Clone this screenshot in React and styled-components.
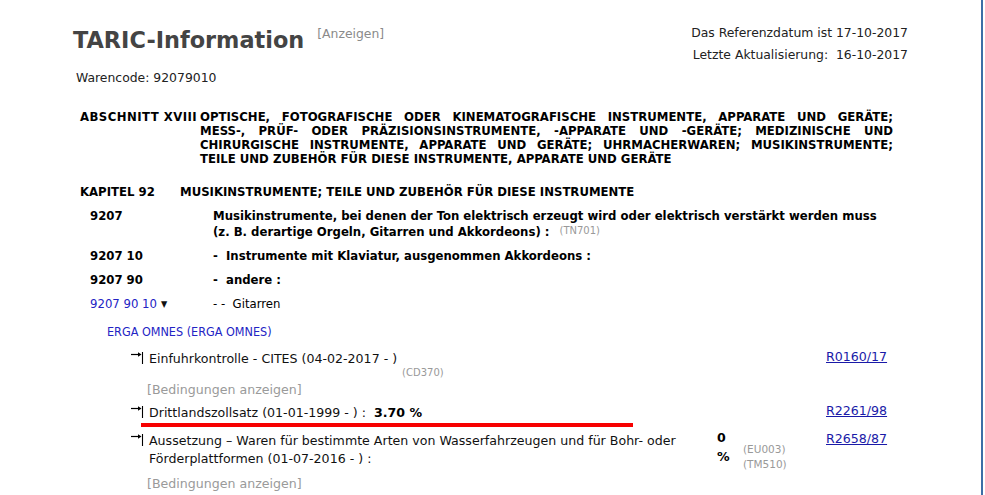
import React from 'react';
import styled, { createGlobalStyle } from 'styled-components';

const GlobalStyle = createGlobalStyle`
  html, body {
    margin: 0;
    padding: 0;
    background: #ffffff;
  }
  body {
    font-family: "DejaVu Sans", Verdana, sans-serif;
    color: #222;
  }
`;

const Page = styled.div`
  position: relative;
  width: 983px;
  height: 495px;
  overflow: hidden;
  border-right: 2px solid #3c6ea6;
  padding: 22px 73px 0 73px;
  box-sizing: border-box;
`;

const Header = styled.div`
  display: flex;
  justify-content: space-between;
  align-items: flex-start;
`;

const TitleRow = styled.div`
  display: flex;
  align-items: flex-start;
  gap: 13px;
  margin-top: 5px;
`;

const Title = styled.h1`
  margin: 0;
  font-family: "DejaVu Sans", Verdana, sans-serif;
  font-size: 22.4px;
  line-height: 26px;
  font-weight: bold;
  color: #444;
`;

const ShowLink = styled.span`
  font-size: 12.4px;
  line-height: 14px;
  color: #8a8a8a;
`;

const Dates = styled.div`
  text-align: right;
  font-size: 12.4px;
  line-height: 22px;
  color: #222;
`;

const Warencode = styled.div`
  margin: 2px 0 0 3px;
  font-size: 12.4px;
  line-height: 20px;
`;

const Heading = styled.div`
  display: grid;
  grid-template-columns: ${p => p.$label}px 1fr;
  margin: ${p => p.$top}px 0 0 7px;
  font-family: "DejaVu Sans Condensed", Tahoma, sans-serif;
  font-weight: bold;
  font-size: 13px;
  line-height: ${p => p.$lh}px;
  color: #000;
`;

const HeadingLabel = styled.div`
  letter-spacing: ${p => p.$spacing || 0}px;
`;

const HeadingText = styled.div`
  width: 693px;
`;

const JustifiedLine = styled.div`
  text-align: ${p => (p.$last ? 'left' : 'justify')};
  text-align-last: ${p => (p.$last ? 'left' : 'justify')};
  white-space: nowrap;
`;

const Nomenclature = styled.div`
  display: flex;
  flex-direction: column;
  gap: 8px;
  margin: 8px 0 0 17px;
  font-family: "DejaVu Sans Condensed", Tahoma, sans-serif;
  font-size: 13px;
  line-height: 16px;
`;

const CodeRow = styled.div`
  display: grid;
  grid-template-columns: 123px 1fr;
  font-weight: ${p => (p.$bold ? 'bold' : 'normal')};
  color: #000;
  margin-top: ${p => p.$shift || 0}px;
`;

const Code = styled.div`
  color: ${p => (p.$link ? '#2323c4' : '#000')};
  white-space: pre;
`;

const Toggle = styled.span`
  font-size: 9px;
  color: #111;
  margin-left: 4px;
  vertical-align: 1px;
`;

const Desc = styled.div`
  white-space: pre-wrap;
  width: 665px;
`;

const Note = styled.span`
  font-family: "DejaVu Sans", Verdana, sans-serif;
  font-weight: normal;
  font-size: 10px;
  line-height: 10px;
  color: #999;
  vertical-align: ${p => p.$drop || 0}px;
  margin-left: ${p => p.$gap || 0}px;
`;

const Geo = styled.div`
  margin: 12px 0 0 34px;
  font-family: "DejaVu Sans Condensed", Tahoma, sans-serif;
  font-size: 12.5px;
  line-height: 16px;
  color: #2323c4;
`;

const Measures = styled.div`
  display: flex;
  flex-direction: column;
  margin: 10px 0 0 57px;
  font-size: 12.6px;
  line-height: 18px;
  color: #111;
`;

const Measure = styled.div`
  display: grid;
  grid-template-columns: 19px 568px 26px 83px auto;
  align-items: start;
  margin-top: ${p => p.$top || 0}px;
`;

const Arrow = styled.svg`
  display: block;
  margin-top: 2px;
`;

const MeasureText = styled.div`
  width: ${p => p.$width || 568}px;
`;

const Value = styled.div`
  width: 16px;
  font-weight: bold;
  line-height: 19px;
  margin-top: -4px;
  color: #000;
`;

const Footnotes = styled.div`
  display: flex;
  flex-direction: column;
  margin-top: 10px;
  font-size: 10.5px;
  line-height: 15px;
  color: #999;
`;

const Regulation = styled.a`
  color: #1a1aa8;
  text-decoration: underline;
  margin-top: -2px;
`;

const Conditions = styled.div`
  margin: ${p => p.$top || 0}px 0 0 17px;
  color: #9a9a9a;
  line-height: 18px;
`;

const Rate = styled.b`
  color: #000;
  margin-left: 4px;
`;

const RedMark = styled.div`
  position: absolute;
  left: 141px;
  top: 423px;
  width: 492px;
  height: 4px;
  background: #f70000;
`;

const EndArrow = () => (
  <Arrow width="14" height="13" viewBox="0 0 14 13">
    <line x1="1" y1="2.5" x2="9" y2="2.5" stroke="#000" strokeWidth="1.2" />
    <polygon points="8,0.3 11.5,2.5 8,4.7" fill="#000" />
    <line x1="12.5" y1="0" x2="12.5" y2="12" stroke="#000" strokeWidth="1.1" />
  </Arrow>
);

const sectionLines = [
  'OPTISCHE, FOTOGRAFISCHE ODER KINEMATOGRAFISCHE INSTRUMENTE, APPARATE UND GERÄTE;',
  'MESS-, PRÜF- ODER PRÄZISIONSINSTRUMENTE, -APPARATE UND -GERÄTE; MEDIZINISCHE UND',
  'CHIRURGISCHE INSTRUMENTE, APPARATE UND GERÄTE; UHRMACHERWAREN; MUSIKINSTRUMENTE;',
  'TEILE UND ZUBEHÖR FÜR DIESE INSTRUMENTE, APPARATE UND GERÄTE',
];

const codes = [
  {
    code: '9207',
    bold: true,
    desc: 'Musikinstrumente, bei denen der Ton elektrisch erzeugt wird oder elektrisch verstärkt werden muss (z. B. derartige Orgeln, Gitarren und Akkordeons) :',
    note: '(TN701)',
  },
  { code: '9207 10', bold: true, desc: '-  Instrumente mit Klaviatur, ausgenommen Akkordeons :' },
  { code: '9207 90', bold: true, desc: '-  andere :' },
  { code: '9207 90 10', link: true, toggle: true, desc: '- -  Gitarren' },
];

export default function App() {
  return (
    <>
      <GlobalStyle />
      <Page>
        <Header>
          <TitleRow>
            <Title>TARIC-Information</Title>
            <ShowLink>[Anzeigen]</ShowLink>
          </TitleRow>
          <Dates>
            <div>Das Referenzdatum ist 17-10-2017</div>
            <div>Letzte Aktualisierung:&nbsp; 16-10-2017</div>
          </Dates>
        </Header>

        <Warencode>Warencode: 92079010</Warencode>

        <Heading $label={120} $lh={14} $top={22}>
          <HeadingLabel $spacing={0.45}>ABSCHNITT XVIII</HeadingLabel>
          <HeadingText>
            {sectionLines.map((line, i) => (
              <JustifiedLine key={line} $last={i === sectionLines.length - 1}>
                {line}
              </JustifiedLine>
            ))}
          </HeadingText>
        </Heading>

        <Heading $label={100} $lh={16} $top={18}>
          <HeadingLabel>KAPITEL 92</HeadingLabel>
          <div>MUSIKINSTRUMENTE; TEILE UND ZUBEHÖR FÜR DIESE INSTRUMENTE</div>
        </Heading>

        <Nomenclature>
          {codes.map(item => (
            <CodeRow key={item.code} $bold={item.bold} $shift={item.shift}>
              <Code $link={item.link}>
                {item.code}
                {item.toggle && <Toggle>▼</Toggle>}
              </Code>
              <Desc>
                {item.desc}
                {item.note && <Note $gap={10} $drop={2}>{item.note}</Note>}
              </Desc>
            </CodeRow>
          ))}
        </Nomenclature>

        <Geo>ERGA OMNES (ERGA OMNES)</Geo>

        <Measures>
          <Measure>
            <EndArrow />
            <MeasureText>
              Einfuhrkontrolle - CITES (04-02-2017 - )
              <Note $gap={5} $drop={-13}>(CD370)</Note>
            </MeasureText>
            <span />
            <span />
            <Regulation href="#">R0160/17</Regulation>
          </Measure>
          <Conditions $top={3}>[Bedingungen anzeigen]</Conditions>

          <Measure $top={5}>
            <EndArrow />
            <MeasureText>
              Drittlandszollsatz (01-01-1999 - ) : <Rate>3.70 %</Rate>
            </MeasureText>
            <span />
            <span />
            <Regulation href="#">R2261/98</Regulation>
          </Measure>

          <Measure $top={10}>
            <EndArrow />
            <MeasureText $width={560}>
              Aussetzung – Waren für bestimmte Arten von Wasserfahrzeugen und für Bohr- oder
              Förderplattformen (01-07-2016 - ) :
            </MeasureText>
            <Value>0 %</Value>
            <Footnotes>
              <span>(EU003)</span>
              <span>(TM510)</span>
            </Footnotes>
            <Regulation href="#">R2658/87</Regulation>
          </Measure>
          <Conditions $top={3}>[Bedingungen anzeigen]</Conditions>
        </Measures>

        <RedMark />
      </Page>
    </>
  );
}
